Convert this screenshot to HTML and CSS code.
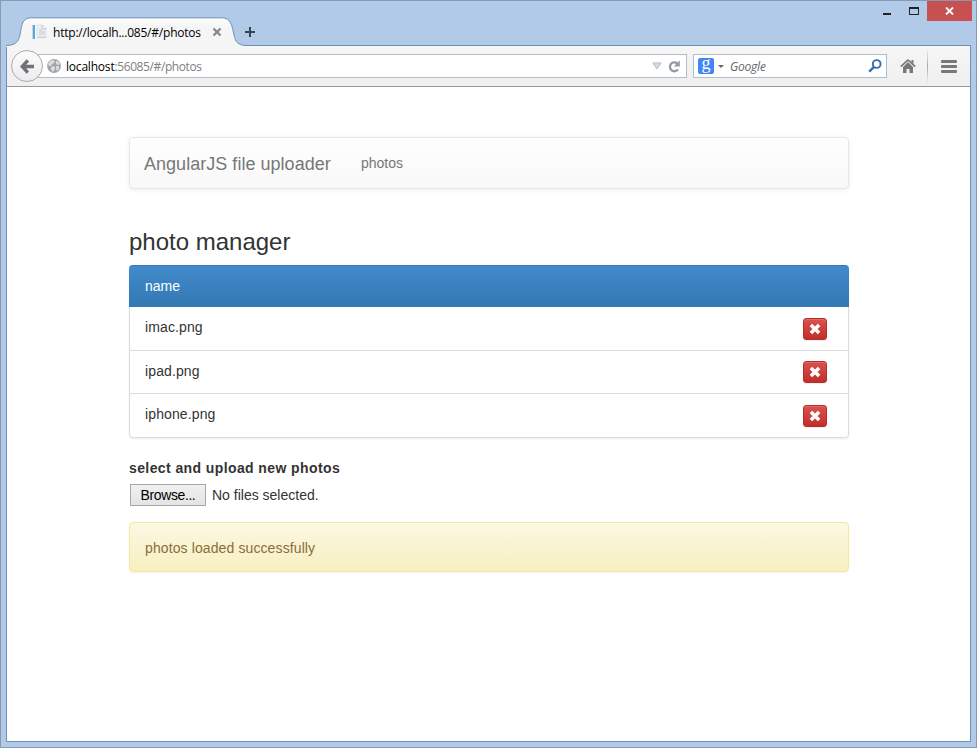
FILE: index.html
```html
<!DOCTYPE html>
<html lang="en">
<head>
<meta charset="utf-8">
<title>AngularJS file uploader</title>
<link rel="stylesheet" href="styles.css">
</head>
<body>
<div class="window">
  <header class="titlebar">
    <div class="tab">
      <svg class="tab-shape" width="241" height="30" viewBox="0 0 241 30">
        <defs><linearGradient id="tabfill" x1="0" y1="0" x2="0" y2="1"><stop offset="0" stop-color="#fdfdfd"/><stop offset=".3" stop-color="#f6f6f6"/><stop offset="1" stop-color="#f5f5f5"/></linearGradient></defs>
        <path d="M0 28.500C9 28.500 12.500 25 14 18C15.500 9 16 0.800 25 0.800H216C225 0.800 226 9 228 18C229.500 25 232 28.500 241 28.500V30H0Z" fill="url(#tabfill)"/>
        <path d="M0 28.500C9 28.500 12.500 25 14 18C15.500 9 16 0.800 25 0.800H216C225 0.800 226 9 228 18C229.500 25 232 28.500 241 28.500" fill="none" stroke="#7090b4"/>
      </svg>
      <svg class="favicon" width="16" height="16" viewBox="0 0 16 16">
        <path d="M1 1h3v14H1z" fill="#61a5d6"/><path d="M1 1h1v14H1z" fill="#b9d9ef"/>
        <path d="M6 1h6l3 3v10H6z" fill="#edf1f4" stroke="#d5dce2" stroke-width=".7"/><path d="M11 1v4h4M8 6h3M8 8h6M8 10h6M6 13h9" fill="none" stroke="#bdc9d4"/>
      </svg>
      <span class="tab-title">http://localh...085/#/photos</span>
      <svg class="tab-close" width="10" height="10" viewBox="0 0 10 10"><path d="M1.500 1.500l7 7M8.500 1.500l-7 7" stroke="#7f8790" stroke-width="2.200"/></svg>
    </div>
    <svg class="new-tab" width="12" height="12" viewBox="0 0 12 12"><path d="M6 1v10M1 6h10" stroke="#38444f" stroke-width="2"/></svg>
    <div class="controls">
      <span class="minimize"></span>
      <span class="maximize"></span>
      <span class="close"><svg width="9" height="8" viewBox="0 0 9 8"><path d="M1 .5l7 7M8 .5l-7 7" stroke="#fff" stroke-width="1.800"/></svg></span>
    </div>
  </header>
  <div class="client">
    <div class="toolbar">
      <div class="back"><svg width="14" height="15" viewBox="0 0 14 15"><path d="M7.800 1.300L2.200 7.500l5.600 6.200M2.500 7.500H14" fill="none" stroke="#6f7277" stroke-width="3.400"/></svg></div>
      <div class="urlbar">
        <svg class="globe" width="14" height="14" viewBox="0 0 14 14"><circle cx="7" cy="7" r="6.900" fill="#a2a3a5"/><path d="M1 5l2-3 3-1 2 1-1 2-2 1-1 2-2 0zM9 2l2 0 2 3-2 1-2-1zM4 8l2-1 2 1 0 2-2 3-2-2zM9 7l3 0 0 3-2 2-1-2z" fill="#d9dadb"/></svg>
        <span class="url"><b>localhost</b>:56085/#/photos</span>
        <svg class="dropdown" width="10" height="8" viewBox="0 0 10 8"><path d="M.8 .9h8.400L5 7z" fill="#d3dae1" stroke="#b5bfc8"/></svg>
        <svg class="reload" width="12" height="13" viewBox="0 0 12 13"><path d="M9.300 3.600A4.400 4.400 0 1 0 10 9.300" fill="none" stroke="#8f9ba6" stroke-width="2.300"/><path d="M11.800 .3v6.200H5.800z" fill="#8f9ba6"/></svg>
      </div>
      <div class="search">
        <span class="google">g</span>
        <svg class="engine-arrow" width="6" height="3" viewBox="0 0 6 3"><path d="M0 0h6L3 3z" fill="#666"/></svg>
        <span class="placeholder">Google</span>
        <svg width="14" height="14" viewBox="0 0 14 14"><circle cx="8.700" cy="5" r="3.900" fill="none" stroke="#2f6fae" stroke-width="1.900"/><path d="M6 7.800L1.200 12.600" stroke="#2f6fae" stroke-width="2.400"/></svg>
      </div>
      <svg class="home" width="16" height="14" viewBox="0 0 16 14"><path d="M8 .8L.8 7.700M8 .8l7.200 6.900" stroke="#76787c" stroke-width="1.700"/><path d="M11.500 1h2v4l-2-2zM8 3l5 5v6H9.500v-4h-3v4H3V8z" fill="#76787c"/></svg>
      <span class="divider"></span>
      <div class="menu"><i></i><i></i><i></i></div>
    </div>
    <main class="page">
      <nav class="navbar"><span class="brand">AngularJS file uploader</span><span class="nav-link">photos</span></nav>
      <h3>photo manager</h3>
      <div class="list">
        <div class="list-head">name</div>
        <div class="row"><span>imac.png</span><button class="remove"><svg width="12" height="12" viewBox="0 0 12 12"><path d="M1.900 1.900l8.200 8.200M10.100 1.900L1.900 10.100" stroke="#fff" stroke-width="3.500"/></svg></button></div>
        <div class="row short"><span>ipad.png</span><button class="remove"><svg width="12" height="12" viewBox="0 0 12 12"><path d="M1.900 1.900l8.200 8.200M10.100 1.900L1.900 10.100" stroke="#fff" stroke-width="3.500"/></svg></button></div>
        <div class="row"><span>iphone.png</span><button class="remove"><svg width="12" height="12" viewBox="0 0 12 12"><path d="M1.900 1.900l8.200 8.200M10.100 1.900L1.900 10.100" stroke="#fff" stroke-width="3.500"/></svg></button></div>
      </div>
      <div class="label">select and upload new photos</div>
      <div class="file"><button class="browse">Browse...</button><span>No files selected.</span></div>
      <div class="alert">photos loaded successfully</div>
    </main>
  </div>
</div>
</body>
</html>
```
FILE: styles.css
```css
* { box-sizing: border-box; }
body { margin: 0; font: 14px/20px "Liberation Sans", Arial, sans-serif; color: #333; }
svg { display: block; flex: none; }
.window { height: 748px; display: flex; flex-direction: column; background: #b0cae7; border: 1px solid #8799b2; padding: 0 5px 5px; }
.titlebar { height: 44px; flex: none; display: flex; align-items: flex-start; }
.tab { position: relative; z-index: 1; width: 236px; height: 30px; margin-top: 16px; padding-left: 25px; display: flex; align-items: center; font: 12px "Open Sans", sans-serif; color: #000; }
.tab-shape { position: absolute; left: 0; top: 0; }
.favicon, .tab-title, .tab-close { position: relative; }
.tab-title { margin-left: 6px; width: 159px; white-space: nowrap; letter-spacing: -.22px; }
.new-tab { margin: 25px 0 0 2px; }
.controls { margin-left: auto; margin-right: -1px; display: flex; }
.minimize { width: 8px; height: 2px; background: #222; margin: 12px 18px 0 0; }
.maximize { width: 10px; height: 8px; border: 1px solid #222; border-top-width: 2px; margin: 6px 8px 0 0; }
.close { width: 45px; height: 20px; background: #c75050; display: flex; align-items: center; justify-content: center; }
.client { flex: 1; border: 1px solid #7090b4; background: #fff; }
.toolbar { height: 41px; border-bottom: 1px solid #999; background: linear-gradient(#f6f6f6, #efefef); display: flex; align-items: center; padding: 0 13px 0 4px; }
.back { width: 32px; height: 32px; border: 1px solid #aaa; border-radius: 50%; background: linear-gradient(#fcfcfc, #ececec); display: flex; align-items: center; justify-content: center; position: relative; z-index: 1; }
.urlbar, .search { height: 24px; border: 1px solid #b1bdc9; background: #fff; display: flex; align-items: center; font: 12px "Open Sans", sans-serif; }
.urlbar { width: 649px; margin-left: -5px; padding: 0 6px 0 8px; }
.url { margin-left: 5px; color: #808080; letter-spacing: -.4px; }
.url b { color: #000; font-weight: 400; letter-spacing: -.2px; }
.dropdown { margin-left: auto; }
.reload { margin-left: 6px; }
.search { width: 194px; margin-left: 6px; padding: 0 4px; }
.google { width: 16px; height: 16px; border-radius: 2px; background: #4285f4; color: #fff; font: 18px/11px "Liberation Serif", serif; text-align: center; }
.engine-arrow { margin: 0 6px 0 4px; }
.placeholder { flex: 1; font-style: italic; color: #666; letter-spacing: -.2px; }
.home { margin-left: 13px; }
.divider { width: 1px; height: 36px; margin: 0 13px 0 11px; background: linear-gradient(transparent, #aaa, transparent); }
.menu { width: 16px; display: grid; gap: 2px; }
.menu i { height: 3px; border-radius: 1px; background: #76787c; }
.page { width: 720px; margin: 50px 0 0 122px; }
.navbar { height: 52px; border: 1px solid #e7e7e7; border-radius: 4px; background: linear-gradient(#fff, #f8f8f8); box-shadow: 0 1px 5px rgba(0,0,0,.075); color: #777; display: flex; align-items: center; padding: 0 14px; }
.brand { font-size: 18px; width: 217px; padding-top: 1px; letter-spacing: .03px; white-space: nowrap; }
h3 { margin: 40px 0 10px; font-size: 24px; line-height: 26px; font-weight: 400; }
.list { border-radius: 4px; box-shadow: 0 1px 2px rgba(0,0,0,.075); }
.list-head { height: 42px; padding: 10px 16px; border-top: 1px solid #3278b3; border-radius: 4px 4px 0 0; background: linear-gradient(#428bca, #3278b3); color: #fff; }
.row { height: 44px; border: 1px solid #ddd; border-top: 0; padding: 11px 21px 0 15px; display: flex; justify-content: space-between; align-items: flex-start; }
.short { height: 43px; padding-top: 10px; }
.row:last-child { border-radius: 0 0 4px 4px; }
.row span { margin-top: -1px; letter-spacing: .12px; }
.short span { margin-top: 0; }
.remove { width: 24px; height: 22px; padding: 0 0 1px 0; border: 1px solid #b92c28; border-radius: 3px; background: linear-gradient(#d9534f, #c12e2a); box-shadow: inset 0 1px 0 rgba(255,255,255,.15), 0 1px 1px rgba(0,0,0,.075); display: flex; align-items: center; justify-content: center; }
.label { margin-top: 20px; font-weight: 700; letter-spacing: .4px; }
.file { height: 22px; margin: 6px 0 16px 1px; display: flex; align-items: center; gap: 6px; }
.browse { width: 76px; height: 22px; padding: 0; border: 1px solid #a6a6a6; background: linear-gradient(#f0f0f0, #e4e4e4); font: 14px "Liberation Sans", sans-serif; color: #000; white-space: nowrap; letter-spacing: -.4px; }
.alert { height: 50px; padding: 15px; border: 1px solid #f5e79e; border-radius: 4px; background: linear-gradient(#fcf8e3, #f8efc0); box-shadow: inset 0 1px 0 rgba(255,255,255,.25), 0 1px 2px rgba(0,0,0,.05); color: #8a6d3b; letter-spacing: .11px; }
```
